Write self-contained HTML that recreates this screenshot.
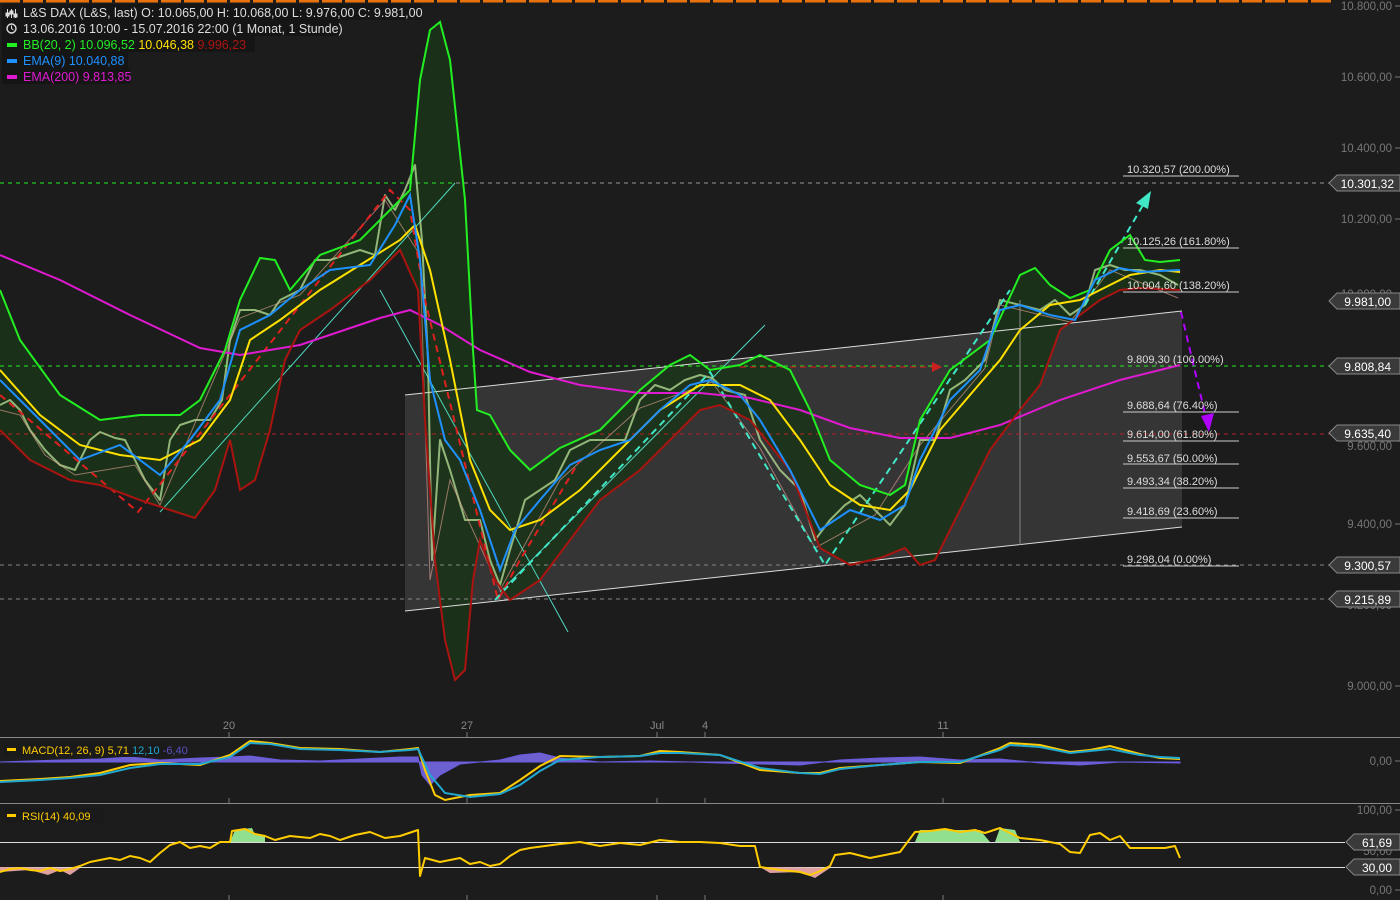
<!DOCTYPE html>
<html><head><meta charset="utf-8"><style>
html,body{margin:0;padding:0;background:#1c1c1c;width:1400px;height:900px;overflow:hidden}
svg{display:block}
text{font-family:"Liberation Sans",sans-serif}
</style></head><body>
<svg width="1400" height="900" viewBox="0 0 1400 900">
<rect width="1400" height="900" fill="#1c1c1c"/>
<line x1="0" y1="1" x2="1332" y2="1" stroke="#e8720c" stroke-width="3" stroke-dasharray="20 3"/>

<polygon points="405,395 1182,311 1182,527 405,611" fill="#3a3a3a" fill-opacity="0.85"/>

<polygon fill="#1c3318" fill-opacity="0.9" points="0,290 20,340 60,395 100,420 140,415 180,415 200,400 225,350 240,300 260,258 275,260 290,290 320,255 360,240 390,210 410,190 420,80 430,30 440,22 450,60 465,200 473,350 477,410 490,415 510,450 530,470 560,448 600,430 640,390 670,365 690,355 710,370 740,365 760,355 790,370 810,410 830,460 860,485 890,495 905,485 920,420 950,370 990,340 1020,275 1035,268 1050,285 1070,298 1090,290 1110,250 1130,235 1145,260 1160,262 1180,260 1180,290 1140,288 1120,290 1100,300 1080,315 1060,330 1040,385 1020,410 990,450 960,510 935,560 920,565 905,548 880,558 850,565 820,548 790,470 750,420 720,405 700,410 680,430 640,470 600,500 570,540 540,580 510,600 495,580 480,540 473,580 465,670 455,680 445,640 435,560 425,420 418,290 400,250 370,280 330,310 300,330 285,360 270,430 255,480 240,490 230,440 215,490 195,518 170,510 140,500 100,485 70,480 30,460 0,430"/>

<line x1="405" y1="395" x2="1182" y2="311" stroke="#ddd" stroke-width="1"/>
<line x1="405" y1="611" x2="1182" y2="527" stroke="#ddd" stroke-width="1"/>
<line x1="1020" y1="300" x2="1020" y2="545" stroke="#888" stroke-width="1"/>

<line x1="0" y1="183" x2="1330" y2="183" stroke="#999" stroke-dasharray="4 4"/>
<line x1="0" y1="183" x2="455" y2="183" stroke="#22ee22" stroke-dasharray="4 4"/>
<line x1="0" y1="366" x2="1330" y2="366" stroke="#22ee22" stroke-dasharray="4 4"/>
<line x1="0" y1="434" x2="1330" y2="434" stroke="#bb2020" stroke-dasharray="4 4"/>
<line x1="0" y1="565" x2="1330" y2="565" stroke="#888" stroke-dasharray="4 4"/>
<line x1="0" y1="599" x2="1330" y2="599" stroke="#888" stroke-dasharray="4 4"/>

<g stroke="#4fd8c0" stroke-width="1" fill="none">
<line x1="160" y1="512" x2="455" y2="183"/>
<line x1="380" y1="290" x2="568" y2="632"/>
<line x1="500" y1="592" x2="765" y2="325"/>
</g>

<polyline fill="none" stroke="#b9e39a" stroke-opacity="0.75" stroke-width="2" stroke-linejoin="round" points="0,405 10,400 20,410 30,430 45,450 60,465 75,470 90,440 100,432 115,438 125,440 135,460 145,480 160,500 170,440 180,425 195,420 210,420 222,400 230,340 240,310 255,310 270,315 280,300 300,290 315,260 330,260 345,255 360,250 375,255 385,195 395,210 405,190 415,165 422,240 428,360 432,560 440,440 450,470 465,520 480,520 490,560 500,585 510,550 525,500 540,490 555,480 570,450 590,440 610,440 625,440 640,400 655,385 670,390 685,380 700,375 712,378 725,390 745,395 760,440 780,470 800,490 815,540 830,520 845,505 860,495 875,510 890,525 905,505 920,440 935,440 950,390 965,380 985,360 1000,300 1020,305 1040,310 1055,300 1070,315 1085,305 1095,270 1110,265 1125,270 1140,270 1160,275 1178,285"/>
<polyline fill="none" stroke="#e9a89a" stroke-opacity="0.6" stroke-width="1" points="0,410 20,415 45,455 75,475 135,465 160,505 240,318 300,295 385,200 420,255 430,580 450,480 500,590 560,480 640,408 712,382 760,448 815,548 875,515 920,445 985,368 1000,305 1070,322 1110,270 1178,298"/>

<polyline fill="none" stroke="#e02020" stroke-width="2" stroke-dasharray="7 5" points="0,395 138,512 165,478 390,190 410,210 425,300 498,600 520,560 580,460"/>
<line x1="740" y1="367" x2="932" y2="367" stroke="#aa2020" stroke-width="1.5" stroke-dasharray="6 4"/>
<polygon points="942,367 932,362 932,372" fill="#cc2020"/>
<polyline fill="none" stroke="#40e8c8" stroke-width="2" stroke-dasharray="7 5" points="495,600 710,372 825,565 1010,290"/>
<line x1="1085" y1="305" x2="1143" y2="205" stroke="#40e8c8" stroke-width="2" stroke-dasharray="7 5"/>
<polygon points="1151,191 1136,203 1148,209" fill="#40e8c8"/>
<line x1="1181" y1="312" x2="1206" y2="418" stroke="#b000ff" stroke-width="2" stroke-dasharray="7 5"/>
<polygon points="1209,432 1201,416 1214,413" fill="#b000ff"/>

<polyline fill="none" stroke="#e01ad0" stroke-width="2" points="0,255 60,280 130,315 200,348 240,355 300,345 380,318 410,310 440,325 480,350 530,372 580,385 640,393 700,393 750,398 800,410 850,428 900,438 950,438 1000,425 1060,400 1120,380 1180,365"/>
<polyline fill="none" stroke="#22ee22" stroke-width="2" points="0,290 20,340 60,395 100,420 140,415 180,415 200,400 225,350 240,300 260,258 275,260 290,290 320,255 360,240 390,210 410,190 420,80 430,30 440,22 450,60 465,200 473,350 477,410 490,415 510,450 530,470 560,448 600,430 640,390 670,365 690,355 710,370 740,365 760,355 790,370 810,410 830,460 860,485 890,495 905,485 920,420 950,370 990,340 1020,275 1035,268 1050,285 1070,298 1090,290 1110,250 1130,235 1145,260 1160,262 1180,260"/>
<polyline fill="none" stroke="#aa1410" stroke-width="2" points="0,430 30,460 70,480 100,485 140,500 170,510 195,518 215,490 230,440 240,490 255,480 270,430 285,360 300,330 330,310 370,280 400,250 418,290 425,420 435,560 445,640 455,680 465,670 473,580 480,540 495,580 510,600 540,580 570,540 600,500 640,470 680,430 700,410 720,405 750,420 790,470 820,548 850,565 880,558 905,548 920,565 935,560 960,510 990,450 1020,410 1040,385 1060,330 1080,315 1100,300 1120,290 1140,288 1180,290"/>
<polyline fill="none" stroke="#ffe000" stroke-width="2" points="0,370 40,415 80,445 120,455 160,460 200,440 230,400 250,340 280,320 320,290 360,265 400,240 415,225 430,270 450,360 470,460 490,510 510,530 540,520 580,490 620,450 660,410 700,385 740,385 770,400 800,440 830,485 860,505 890,510 910,490 940,430 970,395 1000,360 1020,330 1050,305 1080,300 1100,290 1130,275 1160,270 1180,272"/>
<polyline fill="none" stroke="#1e90ff" stroke-width="2" points="0,380 40,420 80,460 120,445 160,475 190,440 220,400 240,330 270,315 300,290 330,270 370,265 395,225 410,195 420,260 430,380 445,440 460,460 480,510 500,570 515,530 540,500 570,465 600,450 630,440 660,410 690,385 710,380 740,395 760,420 790,470 820,530 850,510 880,520 905,505 920,460 950,400 980,370 1000,310 1020,305 1050,315 1075,320 1095,280 1120,268 1140,272 1180,270"/>

<g font-size="11" fill="#ddd">
<text x="1127" y="173">10.320,57 (200.00%)</text>
<text x="1127" y="245">10.125,26 (161.80%)</text>
<text x="1127" y="289">10.004,60 (138.20%)</text>
<text x="1127" y="363">9.809,30 (100.00%)</text>
<text x="1127" y="409">9.688,64 (76.40%)</text>
<text x="1127" y="438">9.614,00 (61.80%)</text>
<text x="1127" y="462">9.553,67 (50.00%)</text>
<text x="1127" y="485">9.493,34 (38.20%)</text>
<text x="1127" y="515">9.418,69 (23.60%)</text>
<text x="1127" y="563">9.298,04 (0.00%)</text>
</g>
<g stroke="#ccc" stroke-width="1">
<line x1="1123" y1="176" x2="1239" y2="176"/><line x1="1123" y1="248" x2="1239" y2="248"/>
<line x1="1123" y1="292" x2="1239" y2="292"/><line x1="1123" y1="412" x2="1239" y2="412"/>
<line x1="1123" y1="441" x2="1239" y2="441"/><line x1="1123" y1="464" x2="1239" y2="464"/>
<line x1="1123" y1="488" x2="1239" y2="488"/><line x1="1123" y1="518" x2="1239" y2="518"/>
<line x1="1123" y1="566" x2="1239" y2="566"/>
</g>

<g font-size="11.5" fill="#777" text-anchor="end">
<text x="1392" y="10">10.800,00</text>
<text x="1392" y="81">10.600,00</text>
<text x="1392" y="152">10.400,00</text>
<text x="1392" y="223">10.200,00</text>
<text x="1392" y="298">10.000,00</text>
<text x="1392" y="450">9.600,00</text>
<text x="1392" y="528">9.400,00</text>
<text x="1392" y="609">9.200,00</text>
<text x="1392" y="690">9.000,00</text>
<text x="1392" y="765">0,00</text>
<text x="1392" y="814">100,00</text>
<text x="1392" y="855">50,00</text>
<text x="1392" y="894">0,00</text>
</g>
<g stroke="#777"><line x1="1395" y1="6" x2="1400" y2="6"/><line x1="1395" y1="77" x2="1400" y2="77"/><line x1="1395" y1="148" x2="1400" y2="148"/><line x1="1395" y1="219" x2="1400" y2="219"/><line x1="1395" y1="524" x2="1400" y2="524"/><line x1="1395" y1="686" x2="1400" y2="686"/><line x1="1395" y1="761" x2="1400" y2="761"/><line x1="1395" y1="810" x2="1400" y2="810"/><line x1="1395" y1="890" x2="1400" y2="890"/></g>

<g font-size="12" fill="#fff" text-anchor="end">
<g><polygon points="1329,183 1337,175 1400,175 1400,191 1337,191" fill="#3a3a3a" stroke="#888"/><text x="1394" y="188">10.301,32</text></g>
<g><polygon points="1329,301 1337,293 1400,293 1400,309 1337,309" fill="#3a3a3a" stroke="#888"/><text x="1391" y="306">9.981,00</text></g>
<g><polygon points="1329,366 1337,358 1400,358 1400,374 1337,374" fill="#3a3a3a" stroke="#888"/><text x="1391" y="371">9.808,84</text></g>
<g><polygon points="1329,433 1337,425 1400,425 1400,441 1337,441" fill="#3a3a3a" stroke="#888"/><text x="1391" y="438">9.635,40</text></g>
<g><polygon points="1329,565 1337,557 1400,557 1400,573 1337,573" fill="#3a3a3a" stroke="#888"/><text x="1391" y="570">9.300,57</text></g>
<g><polygon points="1329,599 1337,591 1400,591 1400,607 1337,607" fill="#3a3a3a" stroke="#888"/><text x="1391" y="604">9.215,89</text></g>
<g><polygon points="1346,842 1354,834 1400,834 1400,850 1354,850" fill="#3a3a3a" stroke="#888"/><text x="1392" y="847">61,69</text></g>
<g><polygon points="1346,867 1354,859 1400,859 1400,875 1354,875" fill="#3a3a3a" stroke="#888"/><text x="1392" y="872">30,00</text></g>
</g>

<g font-size="11" fill="#888" text-anchor="middle">
<text x="229" y="729">20</text><text x="467" y="729">27</text><text x="657" y="729">Jul</text><text x="705" y="729">4</text><text x="943" y="729">11</text>
</g>
<g stroke="#777"><line x1="229" y1="732" x2="229" y2="737"/><line x1="467" y1="732" x2="467" y2="737"/><line x1="657" y1="732" x2="657" y2="737"/><line x1="705" y1="732" x2="705" y2="737"/><line x1="943" y1="732" x2="943" y2="737"/>
<line x1="229" y1="798" x2="229" y2="803"/><line x1="467" y1="798" x2="467" y2="803"/><line x1="657" y1="798" x2="657" y2="803"/><line x1="705" y1="798" x2="705" y2="803"/><line x1="943" y1="798" x2="943" y2="803"/>
<line x1="229" y1="895" x2="229" y2="900"/><line x1="467" y1="895" x2="467" y2="900"/><line x1="657" y1="895" x2="657" y2="900"/><line x1="705" y1="895" x2="705" y2="900"/><line x1="943" y1="895" x2="943" y2="900"/></g>

<line x1="0" y1="737.5" x2="1400" y2="737.5" stroke="#888"/>
<line x1="0" y1="803.5" x2="1400" y2="803.5" stroke="#888"/>

<polyline fill="#7b6cf0" fill-opacity="0.85" stroke="#6a5ce0" stroke-width="1" points="0,762 60,760 100,759 130,757 160,760 200,758 230,757 250,756 280,760 320,761 360,759 400,757 418,757 422,775 430,785 440,775 460,764 500,760 520,755 540,753 560,758 600,762 650,761 690,762 720,763 760,764 800,765 840,760 880,758 920,757 960,760 1000,759 1040,763 1080,765 1120,762 1180,763 1180,762 0,762" />
<polyline fill="none" stroke="#ffcc00" stroke-width="2" points="0,781 40,779 70,777 100,773 130,765 160,763 200,765 230,755 250,741 270,743 300,748 340,749 380,752 410,749 418,748 425,770 435,795 445,800 470,795 500,793 520,780 540,766 560,756 600,757 640,756 660,751 680,752 720,755 760,770 800,773 820,773 840,768 880,765 920,762 960,763 1000,748 1010,743 1040,745 1070,752 1090,750 1110,746 1140,754 1160,758 1180,759"/>
<polyline fill="none" stroke="#20a8d0" stroke-width="2" points="0,782 40,780 70,778 100,775 130,768 160,764 200,764 230,757 250,743 270,744 300,749 340,750 380,752 410,750 418,749 430,775 445,793 470,797 500,794 520,785 540,771 560,760 600,757 640,756 660,753 680,753 720,755 760,768 800,773 820,774 840,769 880,765 920,762 960,762 1000,750 1010,745 1040,747 1070,753 1090,751 1110,749 1140,755 1160,757 1180,758"/>
<rect x="4" y="742" width="163" height="15" fill="#1a1a1a"/>
<rect x="7" y="748" width="9" height="3" fill="#ffcc00"/>
<text x="22" y="754" font-size="11" fill="#ffcc00">MACD(12, 26, 9)  5,71 <tspan fill="#20a8d0">12,10</tspan> <tspan fill="#5a50c0">-6,40</tspan></text>

<line x1="0" y1="842.5" x2="1345" y2="842.5" stroke="#ddd"/>
<line x1="0" y1="867.5" x2="1345" y2="867.5" stroke="#ddd"/>
<polygon points="230,842 235,830 252,828 255,835 265,836 265,842" fill="#90e090"/>
<polygon points="915,842 920,830 980,830 990,842" fill="#90e090"/>
<polygon points="995,842 1000,828 1015,830 1020,842" fill="#90e090"/>
<polygon points="0,867 0,872 30,870 48,875 60,870 70,875 80,868" fill="#e0a0a0"/>
<polygon points="760,867 770,873 800,872 815,878 830,868" fill="#e0a0a0"/>
<polyline fill="none" stroke="#ffcc00" stroke-width="2" stroke-linejoin="round" points="0,872 10,869 20,868 30,870 40,871 50,868 60,871 70,869 80,866 90,862 100,860 110,858 120,860 130,856 140,858 150,862 160,853 170,845 180,842 190,848 200,846 210,848 220,842 230,842 232,831 245,829 255,834 265,836 275,840 290,836 310,838 320,834 330,836 340,840 355,835 370,832 385,838 400,836 418,830 420,876 425,858 440,862 450,860 460,858 470,864 480,862 490,866 500,864 510,856 520,850 530,848 545,846 560,844 580,842 600,846 620,843 640,845 660,840 680,842 700,842 720,843 740,846 755,846 760,867 780,870 800,872 810,875 820,871 830,866 835,855 850,853 870,858 885,855 900,852 915,832 930,831 945,829 960,832 975,830 985,833 1000,828 1010,833 1020,838 1040,840 1060,844 1070,852 1080,853 1090,835 1100,833 1110,840 1120,836 1130,848 1140,848 1150,848 1165,848 1175,846 1180,858"/>
<rect x="4" y="808" width="100" height="15" fill="#1a1a1a"/>
<rect x="7" y="814" width="9" height="3" fill="#ffcc00"/>
<text x="22" y="820" font-size="11" fill="#ffcc00">RSI(14)  40,09</text>

<rect x="2" y="4" width="420" height="16" fill="#151515"/>
<rect x="2" y="20" width="337" height="16" fill="#151515"/>
<rect x="2" y="36" width="253" height="16" fill="#151515"/>
<rect x="2" y="52" width="126" height="16" fill="#151515"/>
<rect x="2" y="68" width="128" height="16" fill="#151515"/>
<g stroke="#ddd" stroke-width="1" fill="none">
<line x1="7.5" y1="9" x2="7.5" y2="18"/><line x1="11.5" y1="9" x2="11.5" y2="18"/><line x1="15.5" y1="9" x2="15.5" y2="18"/>
<rect x="6" y="13" width="3" height="3" fill="#ddd"/><rect x="10" y="11" width="3" height="3" fill="#ddd"/><rect x="14" y="14" width="3" height="3" fill="#ddd"/>
<circle cx="11.5" cy="28.5" r="4.5" stroke-width="1.4"/><polyline points="11.5,25.5 11.5,28.5 13.5,30"/>
</g>
<g font-size="12.5">
<text x="23" y="17" fill="#ddd">L&amp;S DAX (L&amp;S, last)  O: 10.065,00  H: 10.068,00  L: 9.976,00  C: 9.981,00</text>
<text x="23" y="33" fill="#ddd">13.06.2016 10:00 - 15.07.2016 22:00 (1 Monat, 1 Stunde)</text>
<text x="23" y="49" fill="#22ee22">BB(20, 2)  10.096,52  <tspan fill="#ffe000">10.046,38</tspan>  <tspan fill="#aa1410">9.996,23</tspan></text>
<text x="23" y="65" fill="#1e90ff">EMA(9)  10.040,88</text>
<text x="23" y="81" fill="#e01ad0">EMA(200)  9.813,85</text>
</g>
<rect x="7" y="43" width="10" height="4" fill="#22ee22"/>
<rect x="7" y="59" width="10" height="4" fill="#1e90ff"/>
<rect x="7" y="75" width="10" height="4" fill="#e01ad0"/>
</svg>
</body></html>
